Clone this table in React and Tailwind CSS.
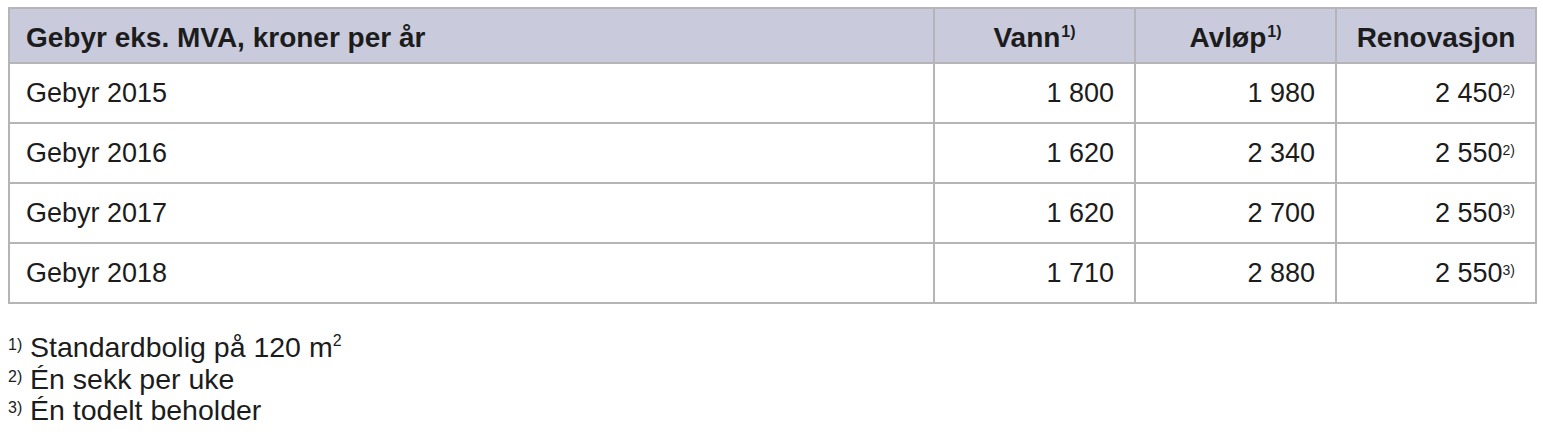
import React from 'react';

const rows = [
    { label: 'Gebyr 2015', vann: '1 800', avlop: '1 980', reno: '2 450', note: '2)' },
    { label: 'Gebyr 2016', vann: '1 620', avlop: '2 340', reno: '2 550', note: '2)' },
    { label: 'Gebyr 2017', vann: '1 620', avlop: '2 700', reno: '2 550', note: '3)' },
    { label: 'Gebyr 2018', vann: '1 710', avlop: '2 880', reno: '2 550', note: '3)' },
];

// small raised marks like "1)" – plain spans, preflight's sup sizing got in the way
const Sup = ({ children, className }) => (
    <span className={`relative leading-none ${className}`}>{children}</span>
);

const notes = [
    { n: '1)', text: <>Standardbolig på 120 m<Sup className="text-[16px] -top-[11px]">2</Sup></> },
    { n: '2)', text: 'Én sekk per uke' },
    { n: '3)', text: 'Én todelt beholder' },
];

const App = () => {
    return (
        <div className="w-[1543px] h-[437px] bg-white text-[#1c1c1c] font-['Liberation_Sans',Arial,sans-serif] pt-[7px] pl-[8px]">
            <table className="table-fixed border-collapse w-[1527px]">
                <colgroup>
                    <col className="w-[925px]" />
                    <col className="w-[201px]" />
                    <col className="w-[201px]" />
                    <col className="w-[200px]" />
                </colgroup>
                <thead>
                    <tr className="h-[55px] bg-[#c9cbdc] text-[28px] font-bold">
                        <th className="border-2 border-[#b5b5b8] text-left pl-4 pt-1">Gebyr eks. MVA, kroner per år</th>
                        <th className="border-2 border-[#b5b5b8] text-center pt-1">Vann<Sup className="text-[16px] -top-[10px] ml-px">1)</Sup></th>
                        <th className="border-2 border-[#b5b5b8] text-center pt-1">Avløp<Sup className="text-[16px] -top-[10px] ml-px">1)</Sup></th>
                        <th className="border-2 border-[#b5b5b8] text-center pt-1">Renovasjon</th>
                    </tr>
                </thead>
                <tbody className="text-[27px]">
                    {rows.map((r) => (
                        <tr key={r.label} className="h-[60px]">
                            <td className="border-2 border-[#b5b5b8] pl-4">{r.label}</td>
                            <td className="border-2 border-[#b5b5b8] text-right pr-5">{r.vann}</td>
                            <td className="border-2 border-[#b5b5b8] text-right pr-5">{r.avlop}</td>
                            <td className="border-2 border-[#b5b5b8] text-right pr-5">{r.reno}<Sup className="text-[14px] -top-[7px]">{r.note}</Sup></td>
                        </tr>
                    ))}
                </tbody>
            </table>

            <div className="mt-[28px] text-[28.5px] leading-[31.5px]">
                {notes.map((f) => (
                    <div key={f.n} className="flex items-baseline h-[31.5px]">
                        <Sup className="text-[16px] -top-[7px] w-[22px] shrink-0">{f.n}</Sup>
                        <span>{f.text}</span>
                    </div>
                ))}
            </div>
        </div>
    );
};

export default App;
